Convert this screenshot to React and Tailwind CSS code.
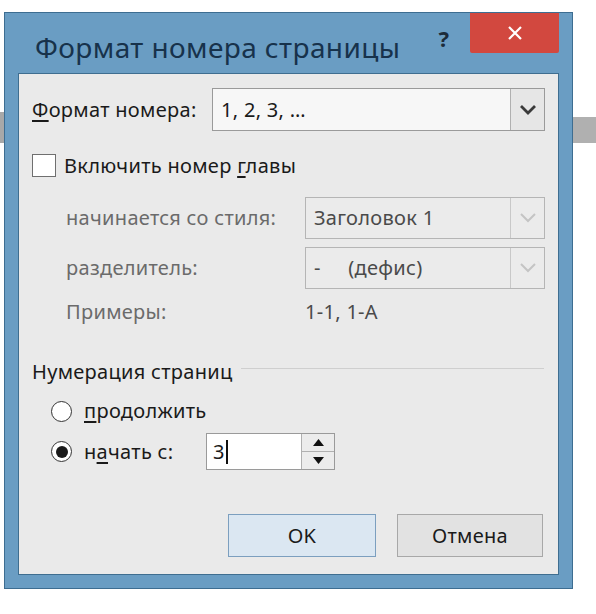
import React from 'react';

const font = { fontFamily: '"Noto Sans", "Open Sans", sans-serif' };

const Chevron = ({ color = '#333', width = 2.6 }) => (
  <svg width="18" height="12" viewBox="0 0 18 12" fill="none">
    <path d="M2 2l7 7 7-7" stroke={color} strokeWidth={width} />
  </svg>
);

const Combo = ({ children, disabled = false, className = '' }) => (
  <div
    className={`flex h-full border ${
      disabled ? 'border-[#b5b5b5] bg-[#ebebeb] text-[#4a4a4a]' : 'border-[#9a9a9a] bg-[#f7f7f7] text-[#1a1a1a]'
    } ${className}`}
  >
    <div className="flex flex-1 items-center pl-[8px]">{children}</div>
    <div
      className={`flex w-[34px] items-center justify-center border-l ${
        disabled ? 'border-[#c8c8c8]' : 'border-[#b0b0b0] bg-[#e6e6e6]'
      }`}
    >
      <Chevron color={disabled ? '#c4c4c4' : '#3a3a3a'} width={disabled ? 2 : 2.8} />
    </div>
  </div>
);

const Radio = ({ checked }) => (
  <div className="flex h-[21px] w-[21px] items-center justify-center rounded-full border-[1.5px] border-[#333] bg-white">
    {checked && <div className="h-[12px] w-[12px] rounded-full bg-[#1a1a1a]" />}
  </div>
);

export default function App() {
  return (
    <div className="flex h-[614px] w-[596px] items-start bg-white" style={font}>
      <div className="w-[4px]">
        <div className="mt-[112px] h-[31px] bg-[#a8a8a8]" />
      </div>

      <div className="mt-[12px] flex h-[577px] w-[569px] flex-col border border-[#3d6d91] bg-[#6a9dc3]">
        <div className="flex h-[60px] items-start">
          <div className="mt-[16px] ml-[30px] flex-1 text-[28px] leading-[36px] tracking-[0.4px] text-[#17324b]">
            Формат номера страницы
          </div>
          <div className="mt-[12px] mr-[21px] text-[22px] font-bold leading-[26px] text-[#1c2b3a]">?</div>
          <div className="mr-[13px] flex h-[40px] w-[89px] items-center justify-center rounded-b-[2px] bg-[#d2483f]">
            <svg width="16" height="16" viewBox="0 0 16 16">
              <path d="M2 2l12 12M14 2L2 14" stroke="#fff" strokeWidth="2.2" />
            </svg>
          </div>
        </div>

        <div className="mx-[13px] flex h-[502px] flex-col border border-[#3f6e90] bg-[#eaeaea] pl-[13px] text-[20px] leading-[24px] tracking-[0.3px] text-[#1a1a1a]">
          <div className="mt-[14px] flex h-[43px] items-center">
            <div className="w-[180px]">
              <span className="underline underline-offset-[3px]">Ф</span>ормат номера:
            </div>
            <Combo className="w-[333px]">1, 2, 3, …</Combo>
          </div>

          <div className="mt-[23px] flex h-[23px] items-center">
            <div className="h-[23px] w-[24px] border border-[#6f6f6f] bg-white" />
            <div className="ml-[8px]">
              Включить номер <span className="underline underline-offset-[3px]">г</span>лавы
            </div>
          </div>

          <div className="mt-[20px] flex h-[42px] items-center">
            <div className="w-[273px] pl-[34px] text-[#6b6b6b]">начинается со стиля:</div>
            <Combo disabled className="w-[240px]">Заголовок 1</Combo>
          </div>

          <div className="mt-[8px] flex h-[42px] items-center">
            <div className="w-[273px] pl-[34px] text-[#6b6b6b]">разделитель:</div>
            <Combo disabled className="w-[240px]">
              <span className="whitespace-pre">-     (дефис)</span>
            </Combo>
          </div>

          <div className="mt-[11px] flex h-[24px] items-center text-[#6b6b6b]">
            <div className="w-[273px] pl-[34px]">Примеры:</div>
            <div className="text-[#4a4a4a]">1-1, 1-A</div>
          </div>

          <div className="mt-[36px] flex h-[24px] items-center">
            <div>Нумерация страниц</div>
            <div className="mt-[-8px] ml-[8px] mr-[14px] h-px flex-1 bg-[#cfcfcf]" />
          </div>

          <div className="mt-[15px] flex h-[24px] items-center">
            <div className="ml-[19px]">
              <Radio />
            </div>
            <div className="ml-[12px]">
              <span className="underline underline-offset-[3px]">п</span>родолжить
            </div>
          </div>

          <div className="mt-[10px] flex h-[37px] items-center">
            <div className="ml-[19px]">
              <Radio checked />
            </div>
            <div className="ml-[12px] w-[122px]">
              н<span className="underline underline-offset-[3px]">а</span>чать с:
            </div>
            <div className="flex h-[37px] w-[129px] border border-[#9a9a9a] bg-white">
              <div className="flex flex-1 items-center pl-[6px]">
                3<div className="ml-[1px] h-[24px] w-[2px] bg-[#111]" />
              </div>
              <div className="flex w-[33px] flex-col border-l border-[#b0b0b0]">
                <div className="flex flex-1 items-center justify-center border-b border-[#b0b0b0] bg-[#ececec]">
                  <svg width="11" height="7" viewBox="0 0 11 7">
                    <path d="M5.5 0L11 7H0z" fill="#111" />
                  </svg>
                </div>
                <div className="flex flex-1 items-center justify-center bg-[#ececec]">
                  <svg width="11" height="7" viewBox="0 0 11 7">
                    <path d="M0 0h11L5.5 7z" fill="#111" />
                  </svg>
                </div>
              </div>
            </div>
          </div>

          <div className="mt-[44px] flex h-[43px] gap-[21px] pl-[196px]">
            <button className="w-[148px] border border-[#7c9fbf] bg-[#dbe7f2] text-[20px] text-[#1a1a1a]">OK</button>
            <button className="w-[146px] border border-[#a8a8a8] bg-[#e2e2e2] text-[20px] text-[#1a1a1a]">Отмена</button>
          </div>
        </div>
      </div>

      <div className="flex-1">
        <div className="mt-[117px] h-[26px] bg-[#b0b0b0]" />
      </div>
    </div>
  );
}
